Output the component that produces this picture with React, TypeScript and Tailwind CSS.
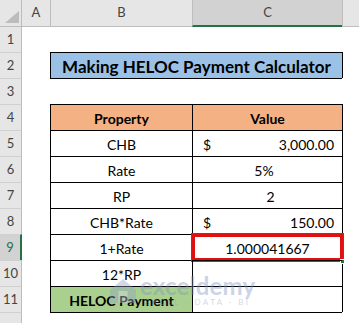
import React from "react";

const hdrBg = "bg-[#e6e6e6]";

function RowHead({ n, sel, first }: { n?: number; sel?: boolean; first?: boolean }) {
  return (
    <div
      className={
        "w-[22px] shrink-0 flex items-center justify-center text-[13px] " +
        (first ? "" : "border-t border-[#d0d0d0] ") +
        (sel
          ? "bg-[#d2d2d2] border-r-2 border-r-[#217346] text-[#217346]"
          : "bg-[#e6e6e6] border-r border-r-[#bdbdbd] text-[#444]")
      }
    >
      {n}
    </div>
  );
}

function Dollar({ v }: { v: string }) {
  return (
    <div className="flex h-full w-full items-center justify-between pl-[10px] pr-[8px]">
      <span>$</span>
      <span>{v}</span>
    </div>
  );
}

export default function App() {
  const rows: {
    n: number;
    b: React.ReactNode;
    c: React.ReactNode;
    bCls?: string;
    cCls?: string;
    sel?: boolean;
  }[] = [
    { n: 4, b: "Property", c: "Value", bCls: "bg-[#f4b183] font-bold", cCls: "bg-[#f4b183] font-bold" },
    { n: 5, b: "CHB", c: <Dollar v="3,000.00" /> },
    { n: 6, b: "Rate", c: <span className="pr-[7px]">5%</span> },
    { n: 7, b: "RP", c: <span className="pl-[6px]">2</span> },
    { n: 8, b: "CHB*Rate", c: <Dollar v="150.00" /> },
    { n: 9, b: "1+Rate", c: "1.000041667", sel: true },
    { n: 10, b: "12*RP", c: "" },
    { n: 11, b: "HELOC Payment", c: "", bCls: "bg-[#a9d08e] font-bold" },
  ];

  return (
    <div className="relative h-[323px] w-[359px] overflow-hidden bg-white font-[Lato,sans-serif] text-[14px] text-black">
      {/* column header */}
      <div className="flex h-[27px]">
        <div className={"relative w-[22px] shrink-0 border-b border-r border-[#bdbdbd] " + hdrBg}>
          <svg className="absolute left-0 top-0" width="22" height="26" viewBox="0 0 22 26">
            <polygon points="5,23 19,11 19,23" fill="#bcbcbc" />
          </svg>
        </div>
        <div className={"w-[28px] shrink-0 flex items-center justify-center border-b border-[#bdbdbd] text-[13px] text-[#444] " + hdrBg}>
          A
        </div>
        <div className={"w-[142px] shrink-0 flex items-center justify-center border-b border-l border-[#bdbdbd] text-[13px] text-[#444] " + hdrBg}>
          B
        </div>
        <div className="w-[150px] shrink-0 flex items-center justify-center border-l border-l-[#bdbdbd] border-b-2 border-b-[#217346] bg-[#d2d2d2] text-[13px] text-[#444]">
          C
        </div>
        <div className={"w-[17px] shrink-0 border-b border-l border-[#bdbdbd] " + hdrBg}></div>
      </div>

      {/* row 1 */}
      <div className="flex h-[25px]">
        <RowHead n={1} first />
      </div>

      {/* row 2 */}
      <div className="flex h-[26px]">
        <RowHead n={2} />
        <div className="w-[28px] shrink-0"></div>
        <div className="w-[292px] shrink-0 flex items-center justify-center border-l border-t border-black bg-[#9bc2e6] pt-[2px] text-[17px] font-bold">
          Making HELOC Payment Calculator
        </div>
        <div className="w-[17px] shrink-0 border-l border-black"></div>
      </div>

      {/* row 3 */}
      <div className="flex h-[26px]">
        <RowHead n={3} />
        <div className="w-[28px] shrink-0"></div>
        <div className="w-[292px] shrink-0 border-t border-black"></div>
      </div>

      {rows.map((r) => (
        <div key={r.n} className="flex h-[26px]">
          <RowHead n={r.n} sel={r.sel} />
          <div className="w-[28px] shrink-0"></div>
          <div className={"w-[142px] shrink-0 flex items-center justify-center border-l border-t border-black pt-[1px] " + (r.bCls ?? "")}>
            {r.b}
          </div>
          <div className={"relative w-[150px] shrink-0 flex items-center justify-center border-l border-t border-black pt-[1px] " + (r.cCls ?? "")}>
            {r.c}
            {r.sel && (
              <>
                <div className="absolute left-[-2px] top-[-2px] h-[29px] w-[153px] border-2 border-[#217346]"></div>
                <div className="absolute left-[-1px] top-[-1px] h-[27px] w-[151px] border-[3px] border-[#e01010]"></div>
                <div className="absolute left-[147px] top-[24px] h-[5px] w-[5px] bg-[#217346] border border-white"></div>
              </>
            )}
          </div>
          <div className="w-[17px] shrink-0 border-l border-black"></div>
        </div>
      ))}

      {/* row 12 */}
      <div className="flex h-[26px]">
        <RowHead />
        <div className="w-[28px] shrink-0"></div>
        <div className="w-[292px] shrink-0 border-t border-black"></div>
      </div>

      {/* watermark */}
      <div className="pointer-events-none absolute left-[108px] top-[274px] flex items-start gap-[2px] opacity-40">
        <svg width="30" height="28" viewBox="0 0 30 28" className="mt-[3px]">
          <path d="M2 13 L15 2 L28 13 L28 26 L2 26 Z" fill="#8fa3c6" />
          <rect x="10.5" y="14" width="9" height="12" fill="#d4dced" />
        </svg>
        <div className="flex flex-col items-center leading-none">
          <span className="text-[24px] font-bold tracking-[0.2px] text-[#7f95bd]">exceldemy</span>
          <span className="mt-[0px] text-[8px] tracking-[2.5px] text-[#8fa3c6]">EXCEL · DATA · BI</span>
        </div>
      </div>
    </div>
  );
}
